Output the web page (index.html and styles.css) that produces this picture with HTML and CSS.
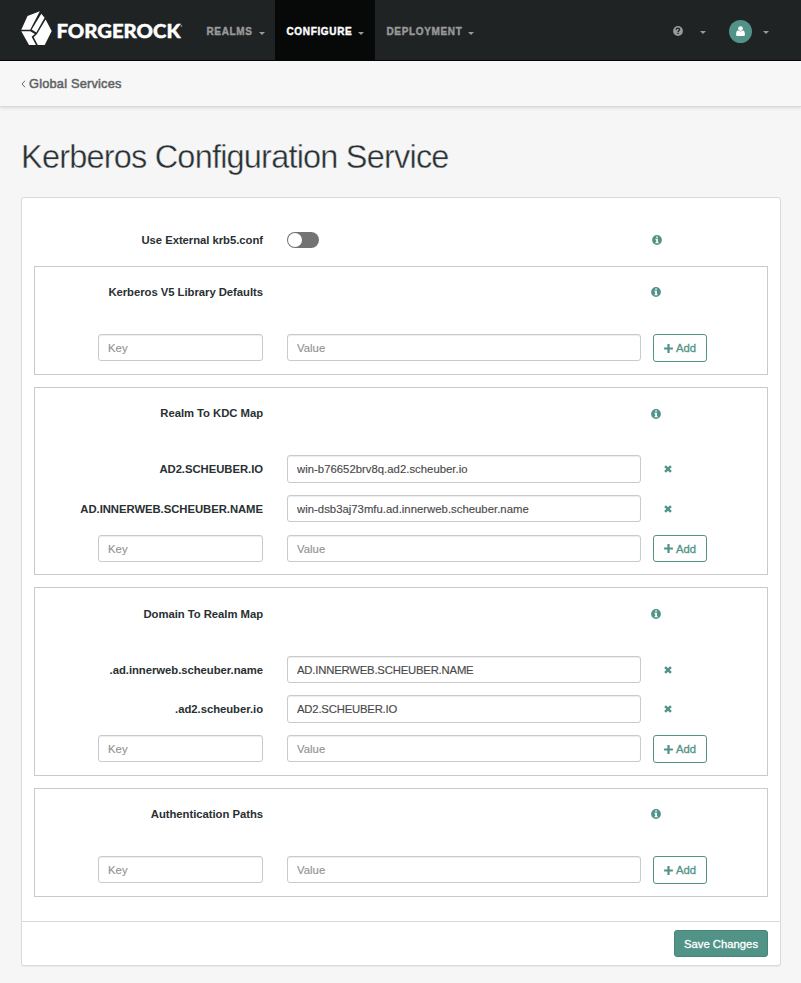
FILE: index.html
```html
<!DOCTYPE html>
<html lang="en">
<head>
<meta charset="utf-8">
<title>Kerberos Configuration Service</title>
<link rel="stylesheet" href="styles.css">
</head>
<body>
<svg class="defs" width="0" height="0" aria-hidden="true">
  <symbol id="info" viewBox="0 0 10 10"><path fill="currentColor" fill-rule="evenodd" d="M5 .1a4.9 4.9 0 1 1 0 9.8A4.9 4.9 0 0 1 5 .1ZM4.2 1.4v1.4h1.7V1.4ZM3.4 3.8v1h.8v2.4h-.8v1h3.3v-1h-.8V3.8Z"/></symbol>
  <symbol id="plus" viewBox="0 0 9 9"><path fill="currentColor" d="M3.4.1h2.2v3.3h3.3v2.2H5.6v3.3H3.4V5.6H.1V3.4h3.3Z"/></symbol>
  <symbol id="times" viewBox="0 0 8 8"><path fill="currentColor" d="M.2 1.9 1.9.2 4 2.3 6.1.2l1.7 1.7L5.7 4l2.1 2.1-1.7 1.7L4 5.7 1.9 7.8.2 6.1 2.3 4Z"/></symbol>
</svg>
<header class="navbar">
  <a class="brand">
    <svg width="164" height="38" viewBox="0 0 164 38">
      <g fill="#fff">
        <path d="M.3 19.800 6.500 6 18.800 1.200 9.200 19.800Z"/>
        <path d="M20.300 3.800 23.600 7.700 15.300 22.400 10.700 19.600Z"/>
        <path d="M.3 21.200H9.200L13.900 24 10.600 26.800 15 35H8Z"/>
        <path d="M24.600 9.600 30.700 21 23.700 35H16.800L12.700 27.300 16 24Z"/>
      </g>
      <text class="wordmark" x="35.5" y="28.3" textLength="124" lengthAdjust="spacingAndGlyphs">FORGEROCK</text>
      <circle cx="160.5" cy="16" r=".8" fill="#aaa"/>
    </svg>
  </a>
  <nav class="menu">
    <a class="item realms"><span>REALMS</span><i class="caret"></i></a>
    <a class="item configure"><span>CONFIGURE</span><i class="caret"></i></a>
    <a class="item deployment"><span>DEPLOYMENT</span><i class="caret"></i></a>
  </nav>
  <div class="tools">
    <svg width="10" height="10" viewBox="0 0 10 10"><circle cx="5" cy="5" r="4.9" fill="#999"/><path d="M3.2 3.7C3.3 1.5 6.7 1.7 6.6 3.6 6.6 4.7 5 4.8 5 6" fill="none" stroke="#1f2324" stroke-width="1.4"/><path d="M4.3 6.8h1.4v1.3H4.3Z" fill="#1f2324"/></svg>
    <i class="caret"></i>
    <span class="avatar"><svg width="9" height="11" viewBox="0 0 9 11"><circle cx="4.5" cy="2.6" r="2.4" fill="#fff"/><path d="M2 4.6c1.5 1.1 3.5 1.1 5 0 1.4.1 1.9 1.8 1.9 3.9 0 1-.6 1.5-1.5 1.5H1.6C.7 10 .1 9.5.1 8.5.1 6.400.6 4.700 2 4.600Z" fill="#fff"/></svg></span>
    <i class="caret"></i>
  </div>
</header>
<div class="crumbs">
  <svg width="5" height="8" viewBox="0 0 5 8"><path d="M4 .8 1 4l3 3.200" fill="none" stroke="#666" stroke-width="1"/></svg>
  <a>Global Services</a>
</div>
<main>
  <h1>Kerberos Configuration Service</h1>
  <form class="panel">
    <div class="body">
      <div class="toggle-row">
        <label>Use External krb5.conf</label>
        <span class="switch"></span>
        <svg class="info"><use href="#info"/></svg>
      </div>
      <section class="group">
        <div class="row lead"><label>Kerberos V5 Library Defaults</label><svg class="info"><use href="#info"/></svg></div>
        <div class="row"><input class="key" placeholder="Key"><input class="value" placeholder="Value"><button type="button" class="add tall"><svg><use href="#plus"/></svg>Add</button></div>
      </section>
      <section class="group map">
        <div class="row lead"><label>Realm To KDC Map</label><svg class="info low"><use href="#info"/></svg></div>
        <div class="row"><label>AD2.SCHEUBER.IO</label><input class="value tall" value="win-b76652brv8q.ad2.scheuber.io"><svg class="remove"><use href="#times"/></svg></div>
        <div class="row"><label>AD.INNERWEB.SCHEUBER.NAME</label><input class="value" value="win-dsb3aj73mfu.ad.innerweb.scheuber.name"><svg class="remove"><use href="#times"/></svg></div>
        <div class="row"><input class="key" placeholder="Key"><input class="value" placeholder="Value"><button type="button" class="add"><svg><use href="#plus"/></svg>Add</button></div>
      </section>
      <section class="group domain">
        <div class="row lead"><label>Domain To Realm Map</label><svg class="info"><use href="#info"/></svg></div>
        <div class="row short"><label>.ad.innerweb.scheuber.name</label><input class="value caps" value="AD.INNERWEB.SCHEUBER.NAME"><svg class="remove"><use href="#times"/></svg></div>
        <div class="row"><label>.ad2.scheuber.io</label><input class="value tall caps" value="AD2.SCHEUBER.IO"><svg class="remove"><use href="#times"/></svg></div>
        <div class="row"><input class="key" placeholder="Key"><input class="value" placeholder="Value"><button type="button" class="add tall"><svg><use href="#plus"/></svg>Add</button></div>
      </section>
      <section class="group">
        <div class="row lead"><label>Authentication Paths</label><svg class="info"><use href="#info"/></svg></div>
        <div class="row"><input class="key" placeholder="Key"><input class="value" placeholder="Value"><button type="button" class="add tall"><svg><use href="#plus"/></svg>Add</button></div>
      </section>
    </div>
    <footer><button type="button" class="save">Save Changes</button></footer>
  </form>
</main>
</body>
</html>
```
FILE: styles.css
```css
* { box-sizing: border-box; }
body {
  margin: 0;
  height: 983px;
  overflow: hidden;
  background: #f6f6f6;
  color: #293033;
  font: 11.3px/16px "Liberation Sans", Arial, sans-serif;
}
.defs { display: none; }
svg { display: block; flex: none; }

.navbar {
  display: flex;
  height: 61px;
  background: #1f2324;
  border-bottom: 1px solid #050606;
}
.brand { width: 195px; padding: 10px 0 0 21px; }
.wordmark { font: 900 18px Lato, sans-serif; fill: #fff; stroke: #fff; stroke-width: .4px; }
.menu { display: flex; }
.item {
  display: flex;
  align-items: center;
  gap: 6px;
  padding: 3px 12px 0 11.5px;
  color: #999;
  font-size: 10px;
  font-weight: bold;
  letter-spacing: .65px;
  -webkit-text-stroke: .4px;
}
.item .caret { margin-left: auto; }
.realms { width: 80px; }
.configure { width: 100px; background: #070908; color: #fff; }
.deployment { width: 110px; }
.caret {
  flex: none;
  margin-top: 3px;
  width: 6px;
  border: 3px solid transparent;
  border-top-color: #999;
  border-bottom: 0;
}
.tools { display: flex; align-items: center; margin-left: auto; padding: 2px 32px 0 0; }
.tools .caret { margin-left: 17px; }
.avatar {
  display: flex;
  align-items: center;
  justify-content: center;
  width: 23px;
  height: 23px;
  margin-left: 23px;
  border-radius: 50%;
  background: #519387;
}
.tools .avatar + .caret { margin-left: 11px; }

.crumbs {
  display: flex;
  align-items: center;
  gap: 3px;
  height: 46px;
  padding: 0 21px;
  border-bottom: 1px solid #dadada;
  box-shadow: 0 1px 3px rgba(0, 0, 0, .12);
  background: #f7f7f7;
  color: #5f6264;
  font-size: 12.8px;
  letter-spacing: .2px;
  -webkit-text-stroke: .5px #5f6264;
}
main { padding: 0 20px 0 21px; }
h1 {
  margin: 0;
  height: 90px;
  padding-top: 30px;
  font: 300 32.5px/40px "Liberation Sans", Arial, sans-serif;
  letter-spacing: -.8px;
  white-space: nowrap;
  -webkit-text-stroke: .4px #f6f6f6;
}
.panel {
  height: 769px;
  border: 1px solid #dadada;
  border-radius: 3px;
  background: #fff;
  box-shadow: 0 1px 1px rgba(0, 0, 0, .05);
}
.body { height: 723px; padding: 0 12px; }
label {
  justify-self: end;
  font-weight: bold;
  letter-spacing: -.04px;
  white-space: nowrap;
}
.toggle-row {
  display: grid;
  grid-template: 16px / 229px 341px 10px;
  column-gap: 24px;
  align-items: center;
  height: 68px;
  padding-top: 34px;
}
.switch { width: 32px; height: 16px; padding: 1px; border-radius: 8px; background: #737373; }
.switch::before { content: ""; display: block; width: 14px; height: 14px; border-radius: 50%; background: #fff; }
.info { width: 10px; height: 10px; color: #519387; }
.group {
  height: 109px;
  margin-bottom: 12px;
  border: 1px solid #c8cacb;
}
.group.map { height: 188px; }
.group.domain { height: 189px; }
.row {
  display: grid;
  grid-template-columns: 228px 354px 54px;
  column-gap: 24px;
  height: 40px;
  align-items: start;
}
.row > :nth-child(3) { margin-left: -12px; }
.row label { margin-top: 6px; }
.row.lead { height: 67px; padding-top: 17px; }
.row.lead label { margin: 0; }
.row.lead .info { grid-column: 3; margin: 3px 0 0 -13.7px; }
.row.lead .info.low { margin-top: 4px; }
.domain .row.lead { height: 68px; padding-top: 18px; }
.row.short { height: 39px; }
input {
  height: 27px;
  margin: 0;
  padding: 0 9px;
  border: 1px solid #c8cacb;
  border-radius: 3px;
  background: #fff;
  box-shadow: inset 0 1px 1px rgba(0, 0, 0, .075);
  color: #4a4a4a;
  font: inherit;
  letter-spacing: .03px;
  -webkit-text-stroke: .15px;
}
input.caps { letter-spacing: -.19px; }
input::placeholder { color: #939393; opacity: 1; }
.key { justify-self: end; width: 165px; }
.value { width: 354px; }
button { margin: 0; font: inherit; -webkit-text-stroke: .3px; }
.add {
  display: flex;
  align-items: center;
  justify-content: center;
  gap: 3px;
  width: 54px;
  height: 27px;
  padding: 0;
  border: 1px solid #519387;
  border-radius: 3px;
  background: #fff;
  color: #519387;
}
.add svg { width: 9px; height: 9px; }
.tall { height: 28px; }
.row .remove { width: 8px; height: 8px; margin: 10px 0 0 -1px; color: #519387; }
footer {
  display: flex;
  justify-content: flex-end;
  height: 44px;
  padding: 8px 12px;
  border-top: 1px solid #dadada;
}
.save {
  width: 94px;
  height: 27px;
  padding: 0;
  border: 1px solid #488478;
  border-radius: 3px;
  background: #519387;
  color: #fff;
}
```
